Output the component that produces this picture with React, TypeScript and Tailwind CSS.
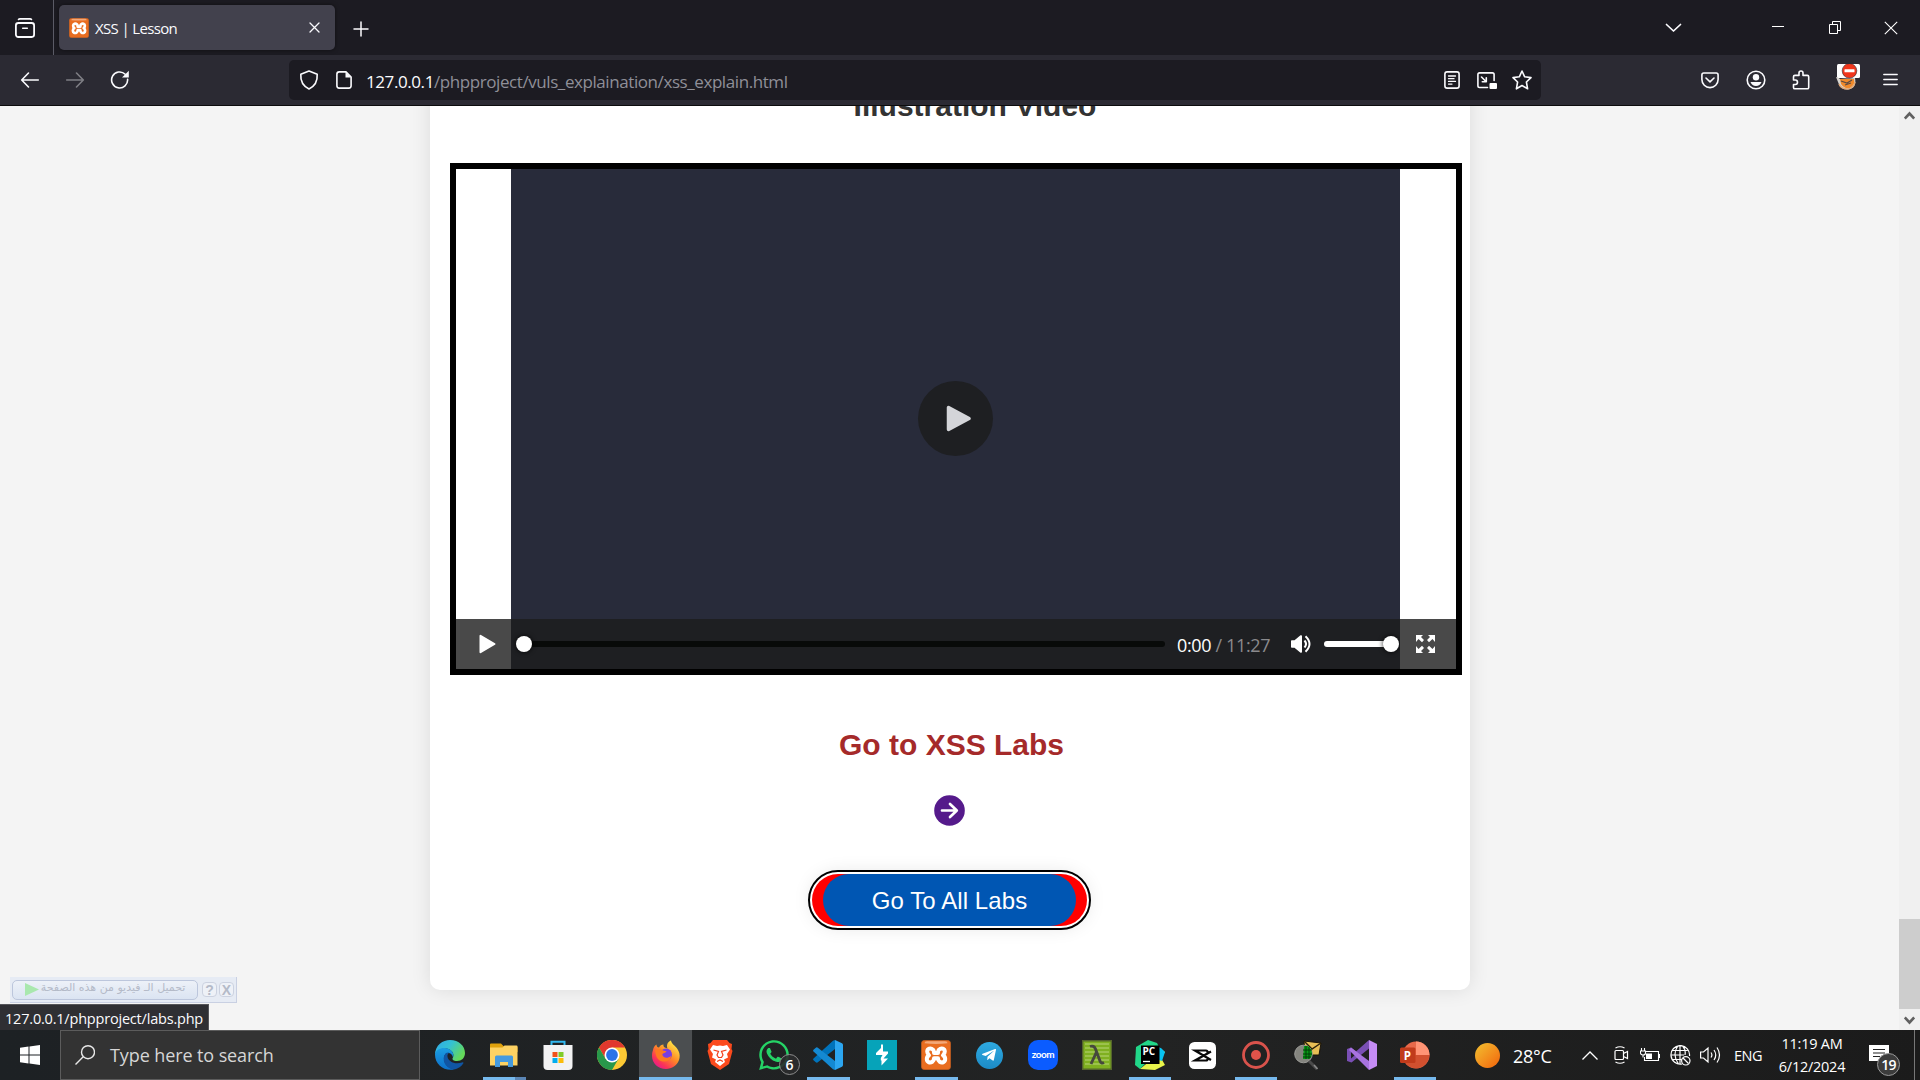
import React from "react";
import { FaWhatsapp, FaTelegramPlane } from "react-icons/fa";

const UI = "font-['Open_Sans','Noto_Sans',sans-serif]";

type SvgProps = { w?: number; h?: number; vb?: string; className?: string; children: React.ReactNode };
const Svg = ({ w = 20, h = 20, vb, className = "", children }: SvgProps) => (
  <svg width={w} height={h} viewBox={vb ?? `0 0 ${w} ${h}`} fill="none" className={`block shrink-0 ${className}`}>
    {children}
  </svg>
);

const line = { stroke: "#fbfbfe", strokeWidth: 1.6, strokeLinecap: "round" as const, strokeLinejoin: "round" as const };

const Xampp = ({ size }: { size: number }) => (
  <Svg w={size} h={size} vb="0 0 30 30">
    <rect x="0.3" y="0.3" width="29.4" height="29.4" rx="3.5" fill="#e96d20" stroke="#b85a22" strokeWidth="0.6" />
    <path d="M3.5 3.2Q3.5 1.2 6 1.2H24Q26.5 1.2 26.5 3.2Q15 4.6 3.5 3.2Z" fill="#f3a878" />
    <path d="M12 9.6C9.6 7.4 6.2 8.6 6.2 11.6C6.2 13.4 7 14.4 8 15.2C6.4 16.2 5.8 17.6 5.8 19C5.8 22 8.8 23.4 11.3 21.8C12.6 21 13 20 13 18.2H17C17 20 17.4 21 18.7 21.8C21.2 23.4 24.2 22 24.2 19C24.2 17.6 23.6 16.2 22 15.2C23 14.4 23.8 13.4 23.8 11.6C23.8 8.6 20.4 7.4 18 9.6C17 10.4 17 11.4 17 13H13C13 11.4 13 10.4 12 9.6Z" stroke="#fff" strokeWidth="4" strokeLinejoin="round" />
  </Svg>
);

const TabBar = () => (
  <div className="flex h-[55px] shrink-0 items-center bg-[#1c1b22]">
    <div className="flex h-full w-[54px] items-center border-r border-[#5b5b66] pl-[15px]">
      <Svg>
        <rect x="0.9" y="5" width="18.2" height="14" rx="2.4" {...line} strokeWidth={1.8} />
        <path d="M3.5 1.5Q4 .9 5 .9H15Q16 .9 16.5 1.5M7.7 10.2H12.3" {...line} />
      </Svg>
    </div>
    <div className="ml-[5px] flex h-[45px] w-[276px] items-center rounded-[5px] bg-[#42414d] pl-[10px] pr-[14px] shadow-[0_0_4px_rgba(0,0,0,0.5)]">
      <Xampp size={20} />
      <span className={`${UI} ml-[6px] flex-1 text-[15px] leading-5 tracking-[-0.65px] text-[#fbfbfe]`}>XSS | Lesson</span>
      <Svg w={13} h={13}><path d="M2 2L11 11M11 2L2 11" {...line} strokeWidth={1.3} /></Svg>
    </div>
    <Svg w={16} h={16} className="ml-[18px] mt-[2px]"><path d="M8 1V15M1 8H15" {...line} strokeWidth={1.5} /></Svg>
    <div className="flex-1" />
    <Svg w={17} h={10} className="mr-[90px]"><path d="M1.5 1.5L8.5 8L15.5 1.5" {...line} strokeWidth={1.7} /></Svg>
    <div className="mr-[45px] h-px w-3 -translate-y-px bg-white" />
    <Svg w={12} h={13} className="mr-[43px]"><path d="M.5 3.5H8.5V12.5H.5ZM3.5 3.5V.5H11.5V9.5H8.5" stroke="#fff" /></Svg>
    <Svg w={14} h={14} className="mr-[22px]"><path d="M.8 .8L13.2 13.2M13.2 .8L.8 13.2" stroke="#fff" strokeWidth="1.1" /></Svg>
  </div>
);

const NavBar = () => (
  <div className="flex h-[51px] shrink-0 items-center border-b border-[#0c0c0d] bg-[#2b2a33]">
    <Svg className="ml-5"><path d="M18.3 10H2M8.5 3L1.7 10L8.5 17" {...line} /></Svg>
    <Svg className="ml-[25px] opacity-40"><path d="M1.7 10H18M11.5 3L18.3 10L11.5 17" {...line} /></Svg>
    <Svg className="ml-[25px]">
      <path d="M17.6 9.2A8 8 0 1 1 15.2 4.2" {...line} />
      <path d="M18.8 .8V7.5H12Z" fill="#fbfbfe" />
    </Svg>
    <div className="ml-[159px] flex h-10 w-[1252px] items-center rounded-[5px] bg-[#1c1b22] pl-[10px] pr-[9px]">
      <Svg><path d="M10 1L18.2 4.3C18.6 10.5 16.2 16 10 19C3.8 16 1.4 10.5 1.8 4.3Z" {...line} /></Svg>
      <Svg w={16} h={18} className="ml-[17px]">
        <path d="M10 .9H3.2Q.9 .9 .9 3.2V14.8Q.9 17.1 3.2 17.1H12.8Q15.1 17.1 15.1 14.8V6Z" {...line} />
        <path d="M9.5 .9L15.1 6.5H9.5Z" fill="#fbfbfe" />
      </Svg>
      <span className={`${UI} ml-[14px] mt-[3px] flex-1 text-[17px] leading-6 tracking-[-0.42px] text-[#8f8f98]`}>
        <span className="text-[#fbfbfe]">127.0.0.1</span>/phpproject/vuls_explaination/xss_explain.html
      </span>
      <Svg w={16} h={18}>
        <rect x=".9" y=".9" width="14.2" height="16.2" rx="2.2" {...line} />
        <path d="M4.5 5H11.5M4.5 7.7H10M4.5 10.4H11.5M4.5 13.1H8" {...line} strokeWidth={1.3} />
      </Svg>
      <Svg w={20} h={17} className="ml-[17px] mt-[1px]">
        <path d="M10.5 15.5H2.6Q.9 15.5 .9 13.8V2.6Q.9 .9 2.6 .9H15.4Q17.1 .9 17.1 2.6V8.500M4.5 5L9 9.5M9.3 5.8V9.8H5.3" {...line} />
        <rect x="12.5" y="11" width="7.5" height="6" rx="1" fill="#fff" />
      </Svg>
      <Svg className="ml-[15px]"><path d="M10 1L12.7 6.8L19 7.6L14.4 12L15.6 18.8L10 15.5L4.4 18.8L5.6 12L1 7.6L7.3 6.8Z" {...line} /></Svg>
    </div>
    <div className="flex-1" />
    <Svg w={18} h={17} className="mr-[27px]"><path d="M2.8 1H15.2Q17.1 1 17.1 2.9V7.5A8.1 8.1 0 0 1 .9 7.5V2.9Q.9 1 2.8 1ZM5 6L9 9.8L13 6" {...line} /></Svg>
    <Svg className="mr-[26px]">
      <circle cx="10" cy="10" r="8.8" {...line} />
      <circle cx="10" cy="7.3" r="3.2" fill="#fbfbfe" /><path d="M4.5 12H15.5Q14 16 10 16Q6 16 4.5 12Z" fill="#fbfbfe" />
    </Svg>
    <Svg w={18} h={20} className="mr-[26px]"><path d="M1.5 10V6.8Q1.5 5.4 2.9 5.4H7V3Q7 1 9 1Q11 1 11 3V5.4H15.3Q16.7 5.4 16.7 6.8V17.4Q16.7 18.8 15.3 18.8H2.9Q1.5 18.8 1.5 17.4V14.5H3.5Q5.5 14.5 5.5 12.3Q5.5 10 3.5 10Z" {...line} /></Svg>
    <Svg w={25} h={26} className="mb-[7px] mr-[22px]">
      <path d="M0 13Q2 13 4 15L19 14Q21 25 11 25.5Q4 25.5 2 18Z" fill="#d8d4cf" />
      <path d="M4 15H18Q19.5 21 14 24Q8 25 5 20Z" fill="#f08a2c" />
      <path d="M5 17L11 19L16 16M9 21L15 19" stroke="#5a4a45" strokeWidth="1.2" />
      <path d="M3 20Q5 25 12 25Q18 24 19 18" stroke="#e0a878" strokeWidth="1.5" />
      <rect x="1" width="23" height="14" rx="1.5" fill="#fff" />
      <circle cx="13.5" cy="6.8" r="7.3" fill="#f0361c" stroke="#2b2a33" strokeWidth=".6" />
      <rect x="8.500" y="5.3" width="10" height="3" rx=".5" fill="#fff" />
    </Svg>
    <Svg w={15} h={13} className="mb-[1px] mr-[22px]"><path d="M.8 1.5H14.2M.8 6.5H14.2M.8 11.5H14.2" {...line} strokeWidth={1.4} /></Svg>
  </div>
);

const VideoPlayer = () => (
  <div className="ml-5 mt-10 flex h-[512px] w-[1012px] shrink-0 flex-col border-[6px] border-black bg-white">
    <div className="ml-[55px] flex h-[450px] w-[889px] shrink-0 items-center justify-center bg-[#282b3a]">
      <div className="mt-[49px] flex size-[75px] items-center justify-center rounded-full bg-[#1e1f22]">
        <Svg w={25} h={27} className="ml-[6px]"><path d="M2.5 2.5V24.5L23 13.5Z" fill="#d4d5d9" stroke="#d4d5d9" strokeWidth="3.5" strokeLinejoin="round" /></Svg>
      </div>
    </div>
    <div className="flex h-[50px] shrink-0">
      <div className="flex w-[55px] shrink-0 items-center bg-[#494949] pl-[23px]">
        <Svg w={17} h={20}><path d="M1.5 1.8V18.2L15.5 10Z" fill="#fff" stroke="#fff" strokeWidth="2" strokeLinejoin="round" /></Svg>
      </div>
      <div className="flex w-[889px] shrink-0 items-center bg-[#1e1f22] pl-[5px]">
        <div className="z-10 size-4 shrink-0 rounded-full bg-white shadow-[0_0_4px_1px_rgba(0,0,0,0.6)]" />
        <div className="-ml-1 h-[6px] w-[637px] shrink-0 rounded-r-[3px] bg-[#080a09]" />
        <span className={`${UI} ml-[12px] mt-[2px] w-[114px] shrink-0 whitespace-nowrap text-[18px] leading-6 tracking-[-0.36px] text-[#8a8a8d]`}>
          <span className="text-white">0:00</span> / 11:27
        </span>
        <Svg w={21} h={18}>
          <path d="M0 6Q0 5.3 .8 5.3H3.5L9.5 .3Q11 -.3 11 1.2V16.8Q11 18.3 9.5 17.7L3.5 12.7H.8Q0 12.7 0 12Z" fill="#fff" />
          <path d="M13.5 5.5Q16.5 9 13.5 12.5M14.5 1.2Q22.5 9 14.5 16.8" stroke="#fff" strokeWidth="2" />
        </Svg>
        <div className="ml-[12px] h-[6px] w-[62px] shrink-0 rounded-l-[3px] bg-white" />
        <div className="-ml-[3px] size-4 shrink-0 rounded-full bg-white shadow-[0_0_4px_1px_rgba(0,0,0,0.6)]" />
      </div>
      <div className="flex w-[56px] shrink-0 items-center bg-[#494949] pl-4">
        <Svg w={19} h={18}>
          <path d="M0 0H7L5 2L8 5L6 7.2L2.5 4L0 7ZM19 0H12L14 2L11 5L13 7.2L16.5 4L19 7ZM0 18H7L5 16L8 13L6 10.8L2.5 14L0 11ZM19 18H12L14 16L11 13L13 10.8L16.5 14L19 11Z" fill="#fff" />
        </Svg>
      </div>
    </div>
  </div>
);

const ScrollBar = () => (
  <div className="flex w-[21px] shrink-0 flex-col items-center bg-[#f0f0f0]">
    <Svg w={11} h={9} className="mt-[5px]"><path d="M.8 7.5L5.5 2.5L10.2 7.5" stroke="#606060" strokeWidth="2.6" /></Svg>
    <div className="mt-[799px] h-[90px] w-full bg-[#cdcdcd]" />
    <Svg w={11} h={9} className="mt-[7px]"><path d="M.8 1.5L5.5 6.5L10.2 1.5" stroke="#606060" strokeWidth="2.6" /></Svg>
  </div>
);

const Page = () => (
  <div className="relative flex h-[924px] shrink-0 overflow-hidden bg-[#f4f4f4]">
    <div className="flex flex-1 items-start pl-[430px]">
      <main className="-mt-[117px] flex h-[1001px] w-[1040px] flex-col rounded-[10px] bg-white pt-[100px] font-['Liberation_Sans',Arial,sans-serif] shadow-[0_0_20px_rgba(0,0,0,0.1)]">
        <h2 className="pl-[50px] text-center text-[30px] font-bold leading-[34px] text-[#333]">Illustration Video</h2>
        <VideoPlayer />
        <h2 className="mt-[53px] text-center text-[30px] font-bold leading-[34px] text-[#a52a2a]"><span className="pl-[3px]">Go to XSS Labs</span></h2>
        <div className="mt-[33px] flex justify-center pr-[2px]">
          <Svg w={31} h={31}><circle cx="15.5" cy="15.5" r="15.3" fill="#551a8b" /><path d="M8 15.5H22.5M16 9L22.8 15.5L16 22" stroke="#fff" strokeWidth="2.7" strokeLinecap="round" strokeLinejoin="round" /></Svg>
        </div>
        <button className="ml-[382px] mt-[48px] h-[52px] w-[275px] rounded-full bg-[red] px-[11px] shadow-[0_0_20px_rgba(0,0,0,0.12)] outline-2 outline-offset-2 outline-black ring-2 ring-white">
          <span className="flex h-full items-center justify-center rounded-full bg-[#0056b3] text-2xl tracking-[0.08px] text-white"><span className="mt-[2px]">Go To All Labs</span></span>
        </button>
      </main>
    </div>
    <ScrollBar />
    <div dir="rtl" className="absolute bottom-[27px] left-[10px] flex h-[26px] w-[227px] items-center gap-[2px] border-b border-r border-[#c9d0e2] bg-[#e6ebf4] px-[2px] text-[#b4bac8]">
      <span className="flex size-[15px] items-center justify-center rounded border border-[#ccd2e0] bg-[#eef1f7] font-['Liberation_Sans',sans-serif] text-[14px] font-bold leading-none">X</span>
      <span className="flex size-[15px] items-center justify-center rounded border border-[#ccd2e0] bg-[#eef1f7] font-['Liberation_Sans',sans-serif] text-[14px] font-bold leading-none">?</span>
      <div className="mr-[2px] flex h-5 w-[187px] items-center justify-center gap-[2px] rounded-[5px] border border-[#bcc6dc] bg-gradient-to-b from-[#edf1f8] to-[#dbe4f2] pb-[3px]">
        <span className="whitespace-nowrap font-['DejaVu_Sans',sans-serif] text-[11px] leading-4 tracking-normal">تحميل الـ فيديو من هذه الصفحة</span>
        <Svg w={14} h={13} className="mt-[2px]"><path d="M0 0L14 6.5L0 13Z" fill="#a9e8ae" /></Svg>
      </div>
    </div>
    <div className={`${UI} absolute bottom-0 left-0 flex h-[26px] w-[209px] items-center border-r border-t border-[#55555a] bg-[#2f2f33] pl-[5px] text-[14.5px] tracking-[-0.2px] text-[#fbfbfe]`}>
      <span className="mt-[3px] whitespace-nowrap">127.0.0.1/phpproject/labs.php</span>
    </div>
  </div>
);

const Edge = () => (
  <Svg w={30} h={30}>
    <defs>
      <linearGradient id="eg" x1="0" y1="0" x2="1" y2=".5"><stop stopColor="#2fa8ea" /><stop offset=".5" stopColor="#34c1d4" /><stop offset="1" stopColor="#64d95a" /></linearGradient>
      <linearGradient id="eb" x1="0" y1="0" x2="0" y2="1"><stop stopColor="#1b9de2" /><stop offset="1" stopColor="#0d6fc9" /></linearGradient>
    </defs>
    <path d="M0 15C0 5 8 0 15 0C24 0 30 6 30 13C30 18 26.5 21 22 21C18.5 21 16.5 19.5 18 17.5C19.8 13 16 9 11 8.5C6 8 2 10 0 15Z" fill="url(#eg)" />
    <path d="M0 14.5C1 9.5 6 7.5 11 8.2C16.5 9 19.5 13 18 17.5C17.5 13.5 13.5 11.5 10.5 14C6.5 19 10.5 28 19 29.5C9 31.5 0 24.5 0 14.5Z" fill="url(#eb)" />
    <path d="M10.5 13.5C6 19 10 28.5 18.5 29.5C23 29 27 26 28.5 23Q28.5 22 27 22.5C20 25 13 21.5 12.5 16.5Q12.3 14.5 14 12.5Q12 12.3 10.5 13.5Z" fill="#1055a3" />
  </Svg>
);
const Explorer = () => (
  <Svg w={28} h={24}>
    <path d="M0 1.5Q0 .5 1 .5H11L14 3.5H26.5Q27.5 3.5 27.5 4.5V9H0Z" fill="#dfa10c" />
    <path d="M0 4.5H12.5L14.5 2.5H26.5Q27.5 2.5 27.5 3.5V22.5H0Z" fill="#fdd263" />
    <path d="M5 24V14Q5 12.5 6.5 12.5H21.5Q23 12.5 23 14V24H18V19H10V24Z" fill="#459ade" />
  </Svg>
);
const Store = () => (
  <Svg w={30} h={30}>
    <path d="M8.5 6V1.8H21.5V6" stroke="#32b8ef" strokeWidth="2" />
    <path d="M.5 5H29.5V26Q29.5 30 25.5 30H4.5Q.5 30 .5 26Z" fill="#f2f2f3" />
    <path d="M9.5 12H14.5V17H9.5Z" fill="#f1511b" /><path d="M15.5 12H20.5V17H15.5Z" fill="#80cc28" />
    <path d="M9.5 18H14.5V23H9.5Z" fill="#00adef" /><path d="M15.5 18H20.5V23H15.5Z" fill="#fbbc09" />
  </Svg>
);
const Chrome = () => (
  <Svg w={30} h={30}>
    <circle cx="15" cy="15" r="15" fill="#fcc934" />
    <path d="M2 7.5A15 15 0 0 1 28 7.5H15L8.5 18.75Z" fill="#e0382d" />
    <path d="M2 7.5A15 15 0 0 0 15 30L21.5 18.75H8.5Z" fill="#28984a" />
    <circle cx="15" cy="15" r="7.5" fill="#fff" /><circle cx="15" cy="15" r="5.9" fill="#2a73e8" />
  </Svg>
);
const Firefox = () => (
  <Svg w={30} h={30}>
    <defs><linearGradient id="ff" x1=".85" y1=".1" x2=".2" y2=".95"><stop stopColor="#ffe847" /><stop offset=".45" stopColor="#ff8a25" /><stop offset=".8" stopColor="#fb3457" /><stop offset="1" stopColor="#e61a8d" /></linearGradient></defs>
    <path d="M2 10C2.5 7.5 3.5 5.5 5.5 4.5C5.5 6.5 6.5 7.5 8 7.5C9 5.5 10.5 4.5 12.5 4.5C12 6.5 13 7.8 16.5 8.5C15 5 17 1.5 20 .5C20.5 4.5 26 6.5 27.5 11C29 14 29 17 28 20C26 25.5 21 29 15 29C7 29 1 23 1 16C1 13.5 1.3 12 2 10Z" fill="url(#ff)" />
    <circle cx="15" cy="14.5" r="6" fill="#7a3ee0" />
    <path d="M4 10C7 8.5 10 9 12 10.5L15.5 11.3C15 13 11.5 13 11.3 14.8C12.5 18.5 17 18.5 20 16C20 22 11 23.5 7 19C5 17 4.5 13 4 10Z" fill="#ff7a20" />
  </Svg>
);
const Brave = () => (
  <Svg w={26} h={30}>
    <path d="M6 0H20L22.5 3L25 4L24.5 9L25.5 11L22 24L13 30L4 24L.5 11L1.5 9L1 4L3.5 3Z" fill="#fb4a1d" />
    <path d="M6 5L10 6L13 5.5L16 6L20 5L23 9.5L20 14L21 17.5L17 19.5L18 22L13 26L8 22L9 19.5L5 17.5L6 14L3 9.5Z" fill="#fff" />
    <path d="M6.5 10L11.5 11.5L10 15L11.5 17.5H14.5L16 15L14.5 11.5L19.5 10M10 21.5L13 20L16 21.500" stroke="#f43f1c" strokeWidth="1.2" />
  </Svg>
);
const WhatsApp = () => (
  <div className="relative size-[30px]">
    <FaWhatsapp className="size-[34px] -translate-x-[2px] -translate-y-[2px] text-[#25d366]" />
    <span className={`${UI} absolute left-[20px] top-[14px] flex size-[21px] items-center justify-center rounded-full border border-[#8c8c8c] bg-[#2b2c2d]/90 text-[14px] font-semibold leading-none text-white`}>6</span>
  </div>
);
const VsCode = () => (
  <Svg w={30} h={30}>
    <path d="M22 0V9L4.5 22.5Q3.5 23 2.5 22L.5 20.3Q-.3 19.3 .5 18.5L20 .8Z" fill="#0073bb" />
    <path d="M22 30V21L4.5 7.5Q3.5 7 2.5 8L.5 9.7Q-.3 10.7 .5 11.5L20 29.2Z" fill="#1489d2" />
    <path d="M22 0L29 3.3Q30 4 30 5V25Q30 26 29 26.7L22 30Z" fill="#2ca6f0" />
  </Svg>
);
const Burp = () => (
  <Svg w={30} h={30}>
    <path d="M0 0H30V30H0Z" fill="#06a3b9" />
    <path d="M14 4.5H16V11.500H21V13.500L16.500 18.500H21L14.500 25.500V20.500H13.800V18L15.500 15H9V13L14 8Z" fill="#fff" />
  </Svg>
);
const Telegram = () => (
  <div className="flex size-[27px] items-center justify-center rounded-full bg-gradient-to-b from-[#2eaae1] to-[#1c8bc6]"><FaTelegramPlane className="mr-[2px] size-4 text-white" /></div>
);
const Zoom = () => (
  <div className="flex size-[30px] items-center justify-center rounded-[10px] bg-[#0b5cff] font-['Lato',sans-serif] text-[10px] font-bold leading-none tracking-[-0.5px] text-white"><span className="-mt-[2px]">zoom</span></div>
);
const Lambda = () => (
  <Svg w={30} h={30}>
    <path d="M.7 .7H29.3V29.3H.7Z" fill="#7fb020" stroke="#55652c" strokeWidth="1.4" />
    <path d="M3 4H27M3 8H27M3 12H27M3 16H27M3 20H27M3 24H27" stroke="#b9d478" strokeWidth="1" />
    <path d="M8 6.5Q12 5 13.5 9L18 21Q19 24 22 22.5M14.5 12L9 24" stroke="#46483d" strokeWidth="2.9" />
  </Svg>
);
const PyCharm = () => (
  <Svg w={30} h={30}>
    <path d="M1 7L13 0L22 3L25 9L5 29L0 25Z" fill="#21d789" /><path d="M22 6L30 12L26 18L30 25L20 30L5 29L16 20Z" fill="#e8f44a" /><path d="M21 7L26 8L30 12L27 21L24 20Z" fill="#07c3f2" />
    <path d="M6 5.5H24.5V24H6Z" fill="#000" />
    <text x="7.5" y="15" fill="#fff" fontFamily="Open Sans" fontWeight="700" fontSize="10">PC</text>
    <path d="M8 21.5H15" stroke="#fff" strokeWidth="1.3" />
  </Svg>
);
const CapCut = () => (
  <Svg w={27} h={27}><rect width="27" height="27" rx="5.5" fill="#fff" /><path d="M22 9.5L6 18.5H17Q18.5 18.5 18.5 17V16M22 18L6 8.5H17Q18.5 8.5 18.5 10V11" stroke="#080808" strokeWidth="2.2" /></Svg>
);
const Recorder = () => (
  <Svg w={28} h={28}><circle cx="14" cy="14" r="12.5" stroke="#d9534c" strokeWidth="2.8" /><circle cx="14" cy="14" r="5" fill="#e0534a" /></Svg>
);
const MailSearch = () => (
  <Svg w={30} h={30}>
    <path d="M10 1L27 3L25 15L11 15Z" fill="#e8bf55" stroke="#1a1408" strokeWidth="1" /><path d="M10 1L18 9L27 3" stroke="#2c220b" strokeWidth="1.4" />
    <circle cx="9.5" cy="14" r="8.8" fill="#85857f" stroke="#9b9b97" />
    <path d="M10 6H14Q18 9 18 14Q18 17 15 19H9Z" fill="#079b16" /><path d="M12 6V19M15 7V19M9 10H18M9 14H18M9 17H17" stroke="#043c08" strokeWidth="1" />
    <path d="M15 21L23 29" stroke="#4a4a4a" strokeWidth="3" /><path d="M20 25L23.5 29" stroke="#8a8a8a" strokeWidth="1.5" />
  </Svg>
);
const VisualStudio = () => (
  <Svg w={30} h={30}>
    <path fillRule="evenodd" d="M0 9L4 7.5L9 11.5L22 0V8.5L4.5 22.5L0 21ZM4 11.500V18.500L8 15Z" fill="#7a4fb5" />
    <path d="M4 7.5L22 21V30L2 10Z" fill="#a873df" />
    <path d="M22 0L30 4V26L22 30Z" fill="#c58cf5" />
  </Svg>
);
const PowerPoint = () => (
  <Svg w={30} h={28}>
    <circle cx="16" cy="14" r="13.5" fill="#e8694a" /><path d="M16 .5A13.5 13.5 0 0 1 29.5 14H16Z" fill="#ff9475" /><path d="M29.5 14A13.5 13.5 0 0 1 4 20L16 14Z" fill="#d2502f" />
    <rect x="0" y="6.5" width="15.5" height="15.5" rx="1.5" fill="#c13b1b" />
    <text x="3.8" y="18.5" fill="#fff" fontFamily="Open Sans" fontWeight="700" fontSize="11.5">P</text>
  </Svg>
);

const apps: { icon: React.ReactNode; cls: string; bar?: string }[] = [
  { icon: <Edge />, cls: "w-[54px]" },
  { icon: <Explorer />, cls: "w-[54px]", bar: "w-[43px] border-r-[11px] border-[#5b86b5]" },
  { icon: <Store />, cls: "w-[54px]" },
  { icon: <Chrome />, cls: "w-[54px]" },
  { icon: <Firefox />, cls: "w-[54px] bg-[#4b4e50] border-r border-[#222425]", bar: "w-[53px]" },
  { icon: <Brave />, cls: "w-[54px]" },
  { icon: <WhatsApp />, cls: "w-[54px]" },
  { icon: <VsCode />, cls: "w-[54px]", bar: "w-[43px]" },
  { icon: <Burp />, cls: "w-[54px]" },
  { icon: <Xampp size={30} />, cls: "w-[54px]", bar: "w-[43px]" },
  { icon: <Telegram />, cls: "w-[53px]" },
  { icon: <Zoom />, cls: "w-[54px]" },
  { icon: <Lambda />, cls: "w-[53px]" },
  { icon: <PyCharm />, cls: "w-[53px]", bar: "w-[42px]" },
  { icon: <CapCut />, cls: "w-[53px]" },
  { icon: <Recorder />, cls: "w-[53px]", bar: "w-[42px]" },
  { icon: <MailSearch />, cls: "w-[53px]" },
  { icon: <VisualStudio />, cls: "w-[53px]" },
  { icon: <PowerPoint />, cls: "w-[53px]", bar: "w-[42px]" },
];

const TaskBar = () => (
  <div className={`${UI} flex h-[50px] shrink-0 bg-gradient-to-r from-[#1d2124] via-[#222323] via-60% to-[#1b1b1b]`}>
    <div className="flex w-[60px] shrink-0 items-center justify-center">
      <Svg w={20} h={20}><path d="M0 2.8L8.5 1.6V9.5H0ZM9.5 1.4L20 0V9.5H9.5ZM0 10.5H8.5V18.4L0 17.2ZM9.5 10.5H20V20L9.5 18.6Z" fill="#fff" /></Svg>
    </div>
    <div className="flex w-[360px] shrink-0 items-center border border-[#5c5c5c] bg-[#333] pl-[14px]">
      <Svg w={20} h={20}><circle cx="13" cy="7.2" r="6.5" stroke="#e8e8e8" strokeWidth="1.4" /><path d="M8.2 11.8L.5 19.5" stroke="#e8e8e8" strokeWidth="1.4" /></Svg>
      <span className="ml-[15px] whitespace-nowrap text-[18px] leading-6 tracking-[-0.1px] text-[#d6d6d6]">Type here to search</span>
    </div>
    <div className="ml-[3px] flex shrink-0">
      {apps.map((a, i) => (
        <div key={i} className={`flex h-full shrink-0 flex-col items-center ${a.cls}`}>
          <div className="flex h-[47px] items-center pt-[3px]">{a.icon}</div>
          {a.bar && <div className={`h-[3px] bg-[#76b9ed] ${a.bar}`} />}
        </div>
      ))}
    </div>
    <div className="ml-[34px] flex flex-1 items-center text-white">
      <div className="size-[25px] shrink-0 rounded-full bg-gradient-to-br from-[#f0c030] to-[#f06008]" />
      <span className="ml-[13px] mt-[2px] w-[69px] whitespace-nowrap text-[18px] tracking-[-0.3px]">28°C</span>
      <Svg w={16} h={9}><path d="M.5 8.5L8 1L15.5 8.5" stroke="#fff" strokeWidth="1.3" /></Svg>
      <Svg w={15} h={18} className="ml-[16px]"><path d="M1 5.5Q1 4.5 2 4.5H8.5Q9.5 4.5 9.5 5.5V12.5Q9.5 13.5 8.5 13.5H2Q1 13.5 1 12.5ZM9.5 7.5L13.5 5.5V12.5L9.5 10.5M1.5 2Q6 -.5 10.5 2M1.5 16Q6 18.5 10.5 16" stroke="#fff" strokeWidth="1.2" /></Svg>
      <Svg w={20} h={14} className="ml-[11px]"><path d="M5 3.5H18.5V12.5H4.5V9M1.5 0V3M4.5 0V3M.5 3H5.5V5Q5.5 7 3 7Q.5 7 .5 5ZM3 7V9.5" stroke="#fff" strokeWidth="1.1" /><path d="M6 5.5H12V11H6ZM19 6H20V10H19Z" fill="#fff" /></Svg>
      <Svg w={21} h={21} className="ml-[10px]">
        <path d="M12 19A9.3 9.3 0 1 1 19.5 11M13 1.5Q16 5 15 10M7.5 1.5Q2 10 8.5 19M10 .8V19M1 10H14M2.5 5.5H17.5M2.5 14.5H12" stroke="#fff" strokeWidth="1.2" />
        <circle cx="15.8" cy="15.8" r="4.2" fill="#1b1b1b" stroke="#fff" strokeWidth="1.2" /><path d="M13 13L18.5 18.5" stroke="#fff" strokeWidth="1.2" />
      </Svg>
      <Svg w={21} h={18} className="ml-[9px]"><path d="M.6 6H3.5L8 2V16L3.5 12H.6ZM11 6.5Q12.8 9 11 11.5M14 4Q17.5 9 14 14M17 1.5Q22 9 17 16.5" stroke="#fff" strokeWidth="1.2" /></Svg>
      <span className="ml-[13px] mt-[2px] w-[41px] whitespace-nowrap text-[14.5px] tracking-[-0.5px]">ENG</span>
      <div className="flex w-[74px] flex-col items-center whitespace-nowrap text-[14.5px] leading-[23px] tracking-[-0.25px]"><span>11:19 AM</span><span>6/12/2024</span></div>
      <div className="relative ml-[20px] h-5 w-5">
        <Svg w={20} h={20}><path d="M0 0H20V16H15L10 20V16H0Z" fill="#fff" /><path d="M4 4.5H16M4 8H16M4 11.5H11" stroke="#222" strokeWidth="1.1" /></Svg>
        <span className="absolute left-[8px] top-[8px] flex size-[23px] items-center justify-center rounded-full border border-[#999] bg-[#3c3c3c] text-[14px] font-semibold leading-none tracking-[-0.8px]">19</span>
      </div>
      <div className="ml-auto mr-[5px] h-full w-px bg-[#777]" />
    </div>
  </div>
);

export default function App() {
  return (
    <div className="flex h-[1080px] w-[1920px] flex-col overflow-hidden">
      <TabBar />
      <NavBar />
      <Page />
      <TaskBar />
    </div>
  );
}
